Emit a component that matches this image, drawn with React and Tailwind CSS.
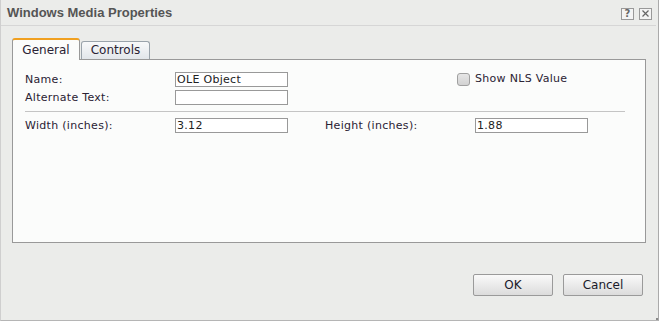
import React from 'react';

const font = { fontFamily: '"DejaVu Sans", Verdana, sans-serif' };

function Field({ value = '', className = '' }) {
  return (
    <div className={`h-[15px] w-[113px] border border-[#999] bg-white px-[1px] text-[11px] leading-[13px] tracking-[0.3px] text-[#222] ${className}`}>
      {value}
    </div>
  );
}

function Label({ children, className = '' }) {
  return <div className={`w-[150px] text-[11px] leading-[15px] tracking-[0.3px] text-[#2a2233] ${className}`}>{children}</div>;
}

export default function App() {
  return (
    <div className="w-[661px] h-[323px] bg-white" style={font}>
      <div className="w-[659px] h-[321px] bg-[#ebecea] border-l border-l-[#cfcfcf] border-r border-r-[#aaa] border-b border-b-[#b5b5b5] flex flex-col relative">
        {/* Title bar */}
        <div className="h-[26px] flex items-center justify-between border-b border-[#d6d6d6] pl-[6px] pr-[4px] mr-[2px]">
          <div className="text-[13px] font-bold text-[#555]" style={{ fontFamily: '"Liberation Sans", Arial, sans-serif' }}>
            Windows Media Properties
          </div>
          <div className="flex gap-[5px] pt-[2px]">
            <div className="w-[13px] h-[12px] border border-[#999] bg-[#f4f4f4] flex items-center justify-center text-[10px] leading-none text-[#666] font-bold">?</div>
            <div className="w-[13px] h-[12px] border border-[#999] bg-[#f4f4f4] flex items-center justify-center">
              <svg width="7" height="7" viewBox="0 0 7 7">
                <path d="M0.5 0.5 L6.5 6.5 M6.5 0.5 L0.5 6.5" stroke="#666" strokeWidth="1.2" />
              </svg>
            </div>
          </div>
        </div>

        {/* Body */}
        <div className="pl-[11px] pt-[11px] pr-[12px]">
          <div className="flex items-end h-[22px]">
            <div className="w-[68px] h-[22px] bg-[#fbfcfb] border border-[#999] border-b-0 border-t-2 border-t-[#f0a020] rounded-t-[3px] text-[12px] text-[#2a2233] text-center leading-[20px] relative z-10 -mb-px pb-px">
              General
            </div>
            <div className="ml-px w-[69px] h-[18px] bg-gradient-to-b from-[#f8f9fa] to-[#e2e6ea] border border-[#9aa3ab] border-b-0 rounded-t-[3px] text-[12px] text-[#2a2233] text-center leading-[17px]">
              Controls
            </div>
          </div>
          <div className="w-[634px] h-[184px] bg-[#fbfcfb] border border-[#999] pl-[12px] pt-[12px]">
            <div className="flex items-center h-[15px]">
              <Label>Name:</Label>
              <Field value="OLE Object" />
              <div className="w-[169px]" />
              <div className="w-[13px] h-[13px] rounded-[3px] border border-[#a0a0a0] bg-gradient-to-b from-[#e6e6e6] to-[#d2d2d2]" />
              <div className="ml-[5px] text-[11px] tracking-[0.3px] text-[#2a2233]">Show NLS Value</div>
            </div>
            <div className="flex items-center h-[15px] mt-[3px]">
              <Label>Alternate Text:</Label>
              <Field />
            </div>
            <div className="w-[600px] h-px bg-[#c4c4c4] mt-[6px]" />
            <div className="flex items-center h-[15px] mt-[6px]">
              <Label>Width (inches):</Label>
              <Field value="3.12" />
              <Label className="ml-[37px]">Height (inches):</Label>
              <Field value="1.88" />
            </div>
          </div>
        </div>

        {/* Footer buttons */}
        <div className="flex justify-end gap-[10px] pr-[15px] mt-[31px]">
          {['OK', 'Cancel'].map((b) => (
            <div
              key={b}
              className="w-[80px] h-[22px] border border-[#9a9a9a] rounded-[2px] bg-gradient-to-b from-[#fafafa] to-[#dcdcdc] text-[12px] text-[#1a1a2a] flex items-center justify-center"
            >
              {b}
            </div>
          ))}
        </div>
        <div className="absolute right-0 bottom-0 w-[2px] h-[2px] bg-[#888]" />
      </div>
    </div>
  );
}
